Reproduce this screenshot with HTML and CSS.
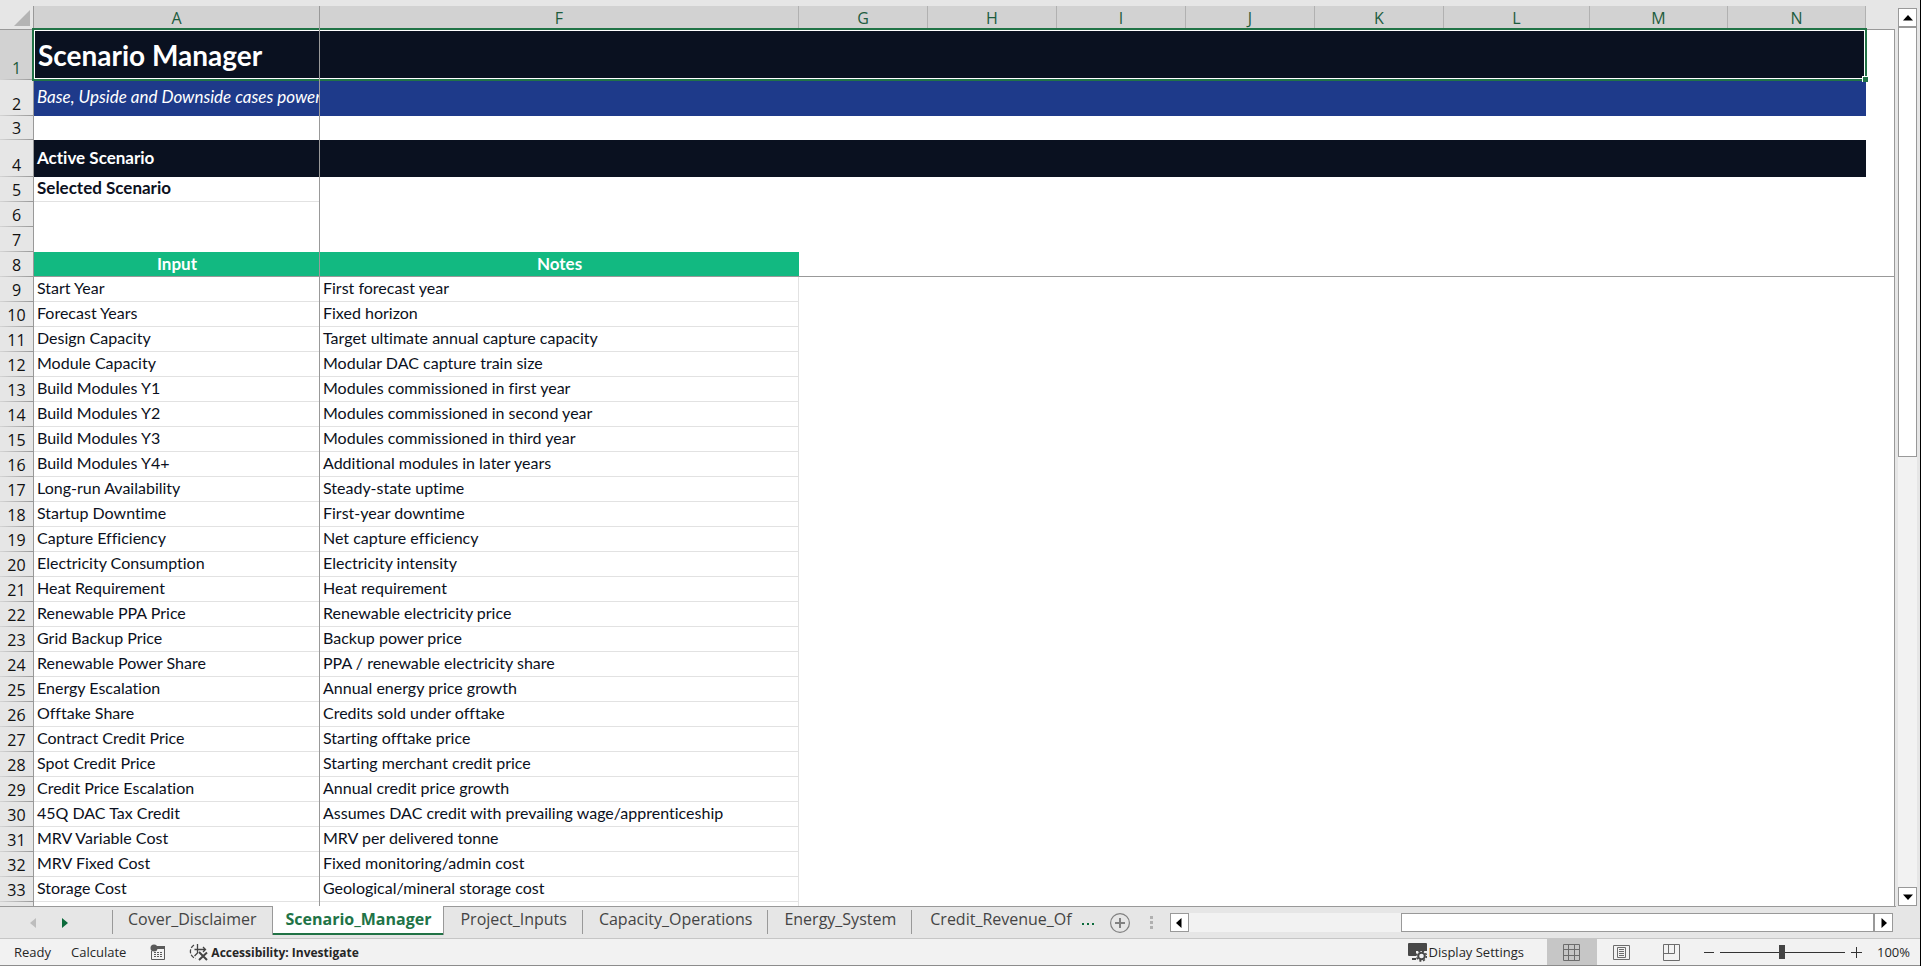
FILE: index.html
```html
<!DOCTYPE html>
<html lang="en">
<head>
<meta charset="utf-8">
<title>Scenario Manager</title>
<link rel="stylesheet" href="styles.css">
</head>
<body>
<main class="workspace">
  <div class="sheet">
    <table class="grid">
      <colgroup><col class="c-num"><col class="c-a"><col class="c-f"><col class="c-std"><col class="c-std"><col class="c-std"><col class="c-std"><col class="c-std"><col class="c-l"><col class="c-m"><col class="c-m"><col></colgroup>
      <thead>
        <tr class="letters"><th class="corner"><svg width="16" height="16" viewBox="0 0 16 16"><path d="M16 0V16H0Z" fill="#b4b4b4"/></svg></th><th>A</th><th>F</th><th>G</th><th>H</th><th>I</th><th>J</th><th>K</th><th>L</th><th>M</th><th>N</th><td class="beyond"></td></tr>
      </thead>
      <tbody>
        <tr class="r-title"><th>1</th><td>Scenario Manager</td><td colspan="9"></td><td></td></tr>
        <tr class="r-sub"><th>2</th><td>Base, Upside and Downside cases power</td><td colspan="9"></td><td></td></tr>
        <tr class="r-gap"><th>3</th><td></td><td colspan="10"></td></tr>
        <tr class="r-section"><th>4</th><td>Active Scenario</td><td colspan="9"></td><td></td></tr>
        <tr class="r-selected"><th>5</th><td>Selected Scenario</td><td colspan="10"></td></tr>
        <tr><th>6</th><td></td><td colspan="10"></td></tr>
        <tr><th>7</th><td></td><td colspan="10"></td></tr>
        <tr class="r-head"><th>8</th><td>Input</td><td>Notes</td><td colspan="9"></td></tr>
      </tbody>
      <tbody class="data">
        <tr><th>9</th><td>Start Year</td><td>First forecast year</td></tr>
        <tr><th>10</th><td>Forecast Years</td><td>Fixed horizon</td></tr>
        <tr><th>11</th><td>Design Capacity</td><td>Target ultimate annual capture capacity</td></tr>
        <tr><th>12</th><td>Module Capacity</td><td>Modular DAC capture train size</td></tr>
        <tr><th>13</th><td>Build Modules Y1</td><td>Modules commissioned in first year</td></tr>
        <tr><th>14</th><td>Build Modules Y2</td><td>Modules commissioned in second year</td></tr>
        <tr><th>15</th><td>Build Modules Y3</td><td>Modules commissioned in third year</td></tr>
        <tr><th>16</th><td>Build Modules Y4+</td><td>Additional modules in later years</td></tr>
        <tr><th>17</th><td>Long-run Availability</td><td>Steady-state uptime</td></tr>
        <tr><th>18</th><td>Startup Downtime</td><td>First-year downtime</td></tr>
        <tr><th>19</th><td>Capture Efficiency</td><td>Net capture efficiency</td></tr>
        <tr><th>20</th><td>Electricity Consumption</td><td>Electricity intensity</td></tr>
        <tr><th>21</th><td>Heat Requirement</td><td>Heat requirement</td></tr>
        <tr><th>22</th><td>Renewable PPA Price</td><td>Renewable electricity price</td></tr>
        <tr><th>23</th><td>Grid Backup Price</td><td>Backup power price</td></tr>
        <tr><th>24</th><td>Renewable Power Share</td><td>PPA / renewable electricity share</td></tr>
        <tr><th>25</th><td>Energy Escalation</td><td>Annual energy price growth</td></tr>
        <tr><th>26</th><td>Offtake Share</td><td>Credits sold under offtake</td></tr>
        <tr><th>27</th><td>Contract Credit Price</td><td>Starting offtake price</td></tr>
        <tr><th>28</th><td>Spot Credit Price</td><td>Starting merchant credit price</td></tr>
        <tr><th>29</th><td>Credit Price Escalation</td><td>Annual credit price growth</td></tr>
        <tr><th>30</th><td>45Q DAC Tax Credit</td><td>Assumes DAC credit with prevailing wage/apprenticeship</td></tr>
        <tr><th>31</th><td>MRV Variable Cost</td><td>MRV per delivered tonne</td></tr>
        <tr><th>32</th><td>MRV Fixed Cost</td><td>Fixed monitoring/admin cost</td></tr>
        <tr><th>33</th><td>Storage Cost</td><td>Geological/mineral storage cost</td></tr>
        <tr><th></th><td></td><td></td></tr>
      </tbody>
    </table>
    <div class="selection"><span class="handle"></span></div>
    <div class="freeze"></div>
  </div>
  <div class="vscroll">
    <button class="arrow" aria-label="Scroll up"><svg width="10" height="6" viewBox="0 0 10 6"><path d="M5 0L10 5.5H0Z"/></svg></button>
    <div class="track"><div class="thumb"></div></div>
    <button class="arrow" aria-label="Scroll down"><svg width="10" height="6" viewBox="0 0 10 6"><path d="M5 6L10 .5H0Z"/></svg></button>
  </div>
</main>
<nav class="tabbar">
  <div class="tabnav">
    <button class="plain" disabled aria-label="Previous sheet"><svg width="6" height="10" viewBox="0 0 6 10"><path d="M0 5L6 0V10Z" fill="#bdbdbd"/></svg></button>
    <button class="plain" aria-label="Next sheet"><svg width="6" height="10" viewBox="0 0 6 10"><path d="M6 5L0 0V10Z" fill="#0c6b3c"/></svg></button>
  </div>
  <div class="tabs">
    <button class="tab first">Cover_Disclaimer</button>
    <button class="tab active">Scenario_Manager</button>
    <button class="tab">Project_Inputs</button>
    <button class="tab">Capacity_Operations</button>
    <button class="tab">Energy_System</button>
    <button class="tab last">Credit_Revenue_Of</button>
  </div>
  <div class="tabtools">
    <button class="plain more" aria-label="More sheets"><svg width="12" height="3" viewBox="0 0 12 3" fill="#0c6b3c"><path d="M0 0h2v2H0zM5 0h2v2H5zM10 0h2v2h-2z"/></svg></button>
    <button class="plain add" aria-label="New sheet"><svg width="20" height="20" viewBox="0 0 20 20" fill="none" stroke="#808080"><circle cx="10" cy="10" r="9.4" stroke-width="1.2"/><path d="M5 10H15M10 5V15" stroke-width="2"/></svg></button>
    <svg class="grip" width="3" height="13" viewBox="0 0 3 13" fill="#b0b0b0"><path d="M0 0h3v3H0zM0 5h3v3H0zM0 10h3v3H0z"/></svg>
  </div>
  <div class="hscroll">
    <button class="arrow" aria-label="Scroll left"><svg width="6" height="10" viewBox="0 0 6 10"><path d="M0 5L5.500 0V10Z"/></svg></button>
    <div class="track"><div class="thumb"></div></div>
    <button class="arrow" aria-label="Scroll right"><svg width="6" height="10" viewBox="0 0 6 10"><path d="M6 5L.5 0V10Z"/></svg></button>
  </div>
</nav>
<footer class="status">
  <span class="ready">Ready</span>
  <span class="calc">Calculate</span>
  <button class="plain macro" aria-label="Record macro"><svg width="16" height="16" viewBox="0 0 16 16"><path d="M1.500 7V15.500H14.500V2.500H8" fill="none" stroke="#5a5a5a"/><path d="M7 2h8v3H7z" fill="#5a5a5a"/><circle cx="4" cy="4" r="3.500" fill="#5a5a5a"/><path d="M4 8.500h2M7 8.500h2M10 8.500h2M4 10.500h2M7 10.500h2M10 10.500h2M4 12.500h2M7 12.500h2M10 12.500h2" stroke="#5a5a5a"/></svg></button>
  <button class="plain access"><svg width="20" height="18" viewBox="0 0 20 18" fill="none" stroke="#444"><path d="M5 2A7.500 7.500 0 0 0 6.500 15.500" stroke-width="1.300" stroke-dasharray="4 1.500"/><path d="M8.500 1V6.500M5.500 6.500H16M14 4l2.500 2.500L14 9M8.500 6.500V10L5.500 13" stroke-width="1.300"/><path d="M10 9L18 17M18 9.500L10 17" stroke-width="2"/></svg>Accessibility: Investigate</button>
  <div class="right">
    <button class="plain display"><svg width="19" height="19" viewBox="0 0 19 19"><path d="M1 0H18a1 1 0 0 1 1 1V8H8V13H1a1 1 0 0 1-1-1V1a1 1 0 0 1 1-1ZM4 15H8V17H4Z" fill="#484848"/><circle cx="13.500" cy="13" r="3.300" fill="none" stroke="#484848" stroke-width="2"/><circle cx="13.500" cy="13" r="4.900" fill="none" stroke="#484848" stroke-width="1.600" stroke-dasharray="2 1.850"/></svg>Display Settings</button>
    <button class="plain view on" aria-label="Normal"><svg width="17" height="17" viewBox="0 0 17 17" fill="none" stroke="#6c6c6c"><path d="M.5 .5H16.500V16.500H.5ZM.5 5.500H16.500M.5 11.500H16.500M5.500 .5V16.500M11.500 .5V16.500"/></svg></button>
    <button class="plain view" aria-label="Page layout"><svg width="17" height="17" viewBox="0 0 17 17" fill="none" stroke="#6c6c6c"><path d="M.5 1.500H16.500V15.500H.5ZM4.500 3.500H12.500V13.500H4.500ZM6 5.500H11M6 7.500H11M6 9.500H11M6 11.500H11"/></svg></button>
    <button class="plain view" aria-label="Page break preview"><svg width="17" height="17" viewBox="0 0 17 17" fill="none" stroke="#6c6c6c"><path d="M.5 .5H16.500V16.500H.5ZM.5 9.500H11.500V.5M5.500 .5V9.500"/></svg></button>
    <button class="plain zoomout" aria-label="Zoom out"><svg width="10" height="10" viewBox="0 0 10 10"><path d="M0 5.500H10" stroke="#333"/></svg></button>
    <input class="slider" type="range" min="0" max="100" value="50" aria-label="Zoom">
    <button class="plain zoomin" aria-label="Zoom in"><svg width="11" height="11" viewBox="0 0 11 11"><path d="M0 5.500H11M5.500 0V11" stroke="#333"/></svg></button>
    <span class="pct">100%</span>
  </div>
</footer>
</body>
</html>
```
FILE: styles.css
```css
* { box-sizing: border-box; }
body {
  margin: 0;
  height: 100vh;
  display: flex;
  flex-direction: column;
  overflow: hidden;
  background: #e6e6e6;
  border-right: 1px solid #000;
  color: #0b1020;
  font-family: "Open Sans", "Noto Sans", sans-serif;
}
button { font-family: inherit; margin: 0; }
svg { display: block; flex: none; }
.plain {
  border: 0;
  padding: 0;
  background: none;
  display: flex;
  align-items: center;
  color: inherit;
}

.workspace { flex: 1; min-height: 0; display: flex; }
.sheet {
  position: relative;
  flex: 1;
  min-width: 0;
  overflow: hidden;
  padding-top: 6px;
}
.grid {
  width: 100%;
  table-layout: fixed;
  border-collapse: separate;
  border-spacing: 0;
  background: linear-gradient(#999, #999) right / 1px 100% no-repeat, #fff;
  font-family: Lato, "Open Sans", sans-serif;
  font-size: 16px;
  line-height: 20px;
  font-variant-ligatures: none;
}
.c-num { width: 34px; }
.c-a { width: 286px; }
.c-f { width: 479px; }
.c-std { width: 129px; }
.c-l { width: 146px; }
.c-m { width: 138px; }
.grid tr { height: 25px; }
.grid th, .grid td { padding: 0; }
.grid td { text-align: left; padding: 0 0 2px 3px; white-space: nowrap; overflow: hidden; }
.grid tbody th {
  background: linear-gradient(90deg, #d4d4d4, #999) bottom / 100% 1px no-repeat, #e6e6e6;
  border-right: 1px solid #999;
  font: 16px/20px "Open Sans", sans-serif;
  vertical-align: bottom;
  padding-bottom: 2px;
  color: #111;
}
.grid .letters { height: 24px; }
.letters th {
  background: #d2d2d2;
  border-right: 1px solid #b1b1b1;
  border-bottom: 1px solid #999;
  font: 16px/22px "Open Sans", sans-serif;
  color: #1d5c3e;
}
.grid .letters .corner { background: #e6e6e6; border-right-color: #999; padding: 0 3px 3px 14px; vertical-align: bottom; }
.letters .beyond { background: #e6e6e6; border-bottom: 1px solid #999; }

.grid .r-title { height: 50px; }
.grid .r-title th { background-color: #d2d2d2; color: #1d5c3e; }
.grid .r-title td { font-size: 28px; line-height: 40px; font-weight: bold; color: #fff; padding: 0 0 0 4px; }
.r-title td:not(:last-child), .r-section td:not(:last-child) { background: #0a1120; }
.grid .r-sub { height: 36px; }
.r-sub td { font-size: 17px; font-style: italic; color: #fff; }
.r-sub td:not(:last-child) { background: #1e3a8a; }
.grid .r-gap { height: 24px; }
.grid .r-section { height: 37px; }
.r-section td, .r-head td { font-size: 17px; font-weight: bold; color: #fff; }
.r-selected td { font-size: 17px; font-weight: bold; }
.r-selected td:nth-child(2), .data td { border-bottom: 1px solid #e2e2e2; }
.data td:nth-child(3) { border-right: 1px solid #e2e2e2; }
.grid .r-head td { text-align: center; padding: 0; border-bottom: 1px solid #999; }
.r-head td:not(:last-child) { background: #12b981; }

.selection {
  position: absolute;
  left: 32px;
  top: 28px;
  width: 1835px;
  height: 53px;
  border: 2px solid #217346;
  box-shadow: inset 0 0 0 1px #fff;
}
.handle {
  position: absolute;
  right: -3px;
  bottom: -3px;
  width: 6px;
  height: 6px;
  background: #217346;
  border: 1px solid #fff;
  border-width: 1px 0 0 1px;
}
.freeze {
  position: absolute;
  left: 319px;
  top: 6px;
  bottom: 0;
  width: 1px;
  background: #999;
}

.arrow {
  width: 19px;
  height: 19px;
  flex: none;
  padding: 0;
  border: 1px solid #999;
  background: #fff;
  display: flex;
  align-items: center;
  justify-content: center;
}
.track { flex: 1; background: #f2f2f2; }
.thumb { background: #fff; border: 1px solid #999; }
.vscroll { flex: none; width: 25px; padding: 8px 3px 0; display: flex; flex-direction: column; }
.vscroll .thumb { height: 50%; }

.tabbar { flex: none; height: 33px; display: flex; border-bottom: 1px solid #c6c6c6; }
.tabnav { width: 112px; padding-left: 30px; display: flex; gap: 26px; border-top: 1px solid #999; }
.tabs { display: flex; }
.tab {
  position: relative;
  height: 32px;
  border: 0;
  border-top: 1px solid #999;
  background: none;
  padding: 0 16px 7px;
  font-size: 16px;
  line-height: 22px;
  color: #444;
}
.tab::after { content: ""; position: absolute; right: 0; top: 3px; height: 24px; width: 1px; background: #999; }
.tab.first::before { content: ""; position: absolute; left: 0; top: 3px; height: 24px; width: 1px; background: #999; }
.tab.first::after, .tab.active::after, .tab.last::after { display: none; }
.tab.active {
  height: 29px;
  padding: 0 12px 3px;
  border: 1px solid #999;
  border-width: 0 1px;
  box-shadow: inset 0 -2px #217346;
  background: #fff;
  color: #217346;
  font-weight: bold;
}
.tab.last { padding: 0 0 7px 18px; }
.tabtools { flex: none; width: 98px; padding-left: 10px; display: flex; align-items: center; border-top: 1px solid #999; }
.more { margin-top: 4px; }
.add { margin: 0 20px 0 16px; }
.hscroll { flex: 1; display: flex; padding: 6px 3px 0 0; margin-right: 24px; border-top: 1px solid #999; }
.hscroll .track { height: 19px; display: flex; justify-content: flex-end; }
.hscroll .thumb { width: 69%; }

.status {
  flex: none;
  height: 27px;
  display: flex;
  align-items: center;
  background: #f2f2f2;
  border-bottom: 1px solid #8c8c8c;
  font-size: 13px;
  line-height: 18px;
  color: #262626;
  padding-left: 14px;
}
.status button { font-size: 13px; }
.calc { margin-left: 20px; }
.macro { margin-left: 24px; }
.status .access { margin-left: 23px; font-size: 12px; font-weight: bold; gap: 2px; }
.right { margin-left: auto; height: 100%; display: flex; align-items: center; padding-right: 10px; }
.display { gap: 1px; margin-right: 23px; }
.view { width: 50px; height: 100%; justify-content: center; }
.view.on { background: #c6c6c6; }
.zoomout { margin-left: 7px; }
.slider { appearance: none; width: 125px; height: 16px; margin: 0 6px; background: linear-gradient(#333, #333) center / 100% 1px no-repeat; }
.slider::-webkit-slider-thumb { appearance: none; width: 6px; height: 14px; background: #444; }
.pct { margin-left: 15px; }
```
